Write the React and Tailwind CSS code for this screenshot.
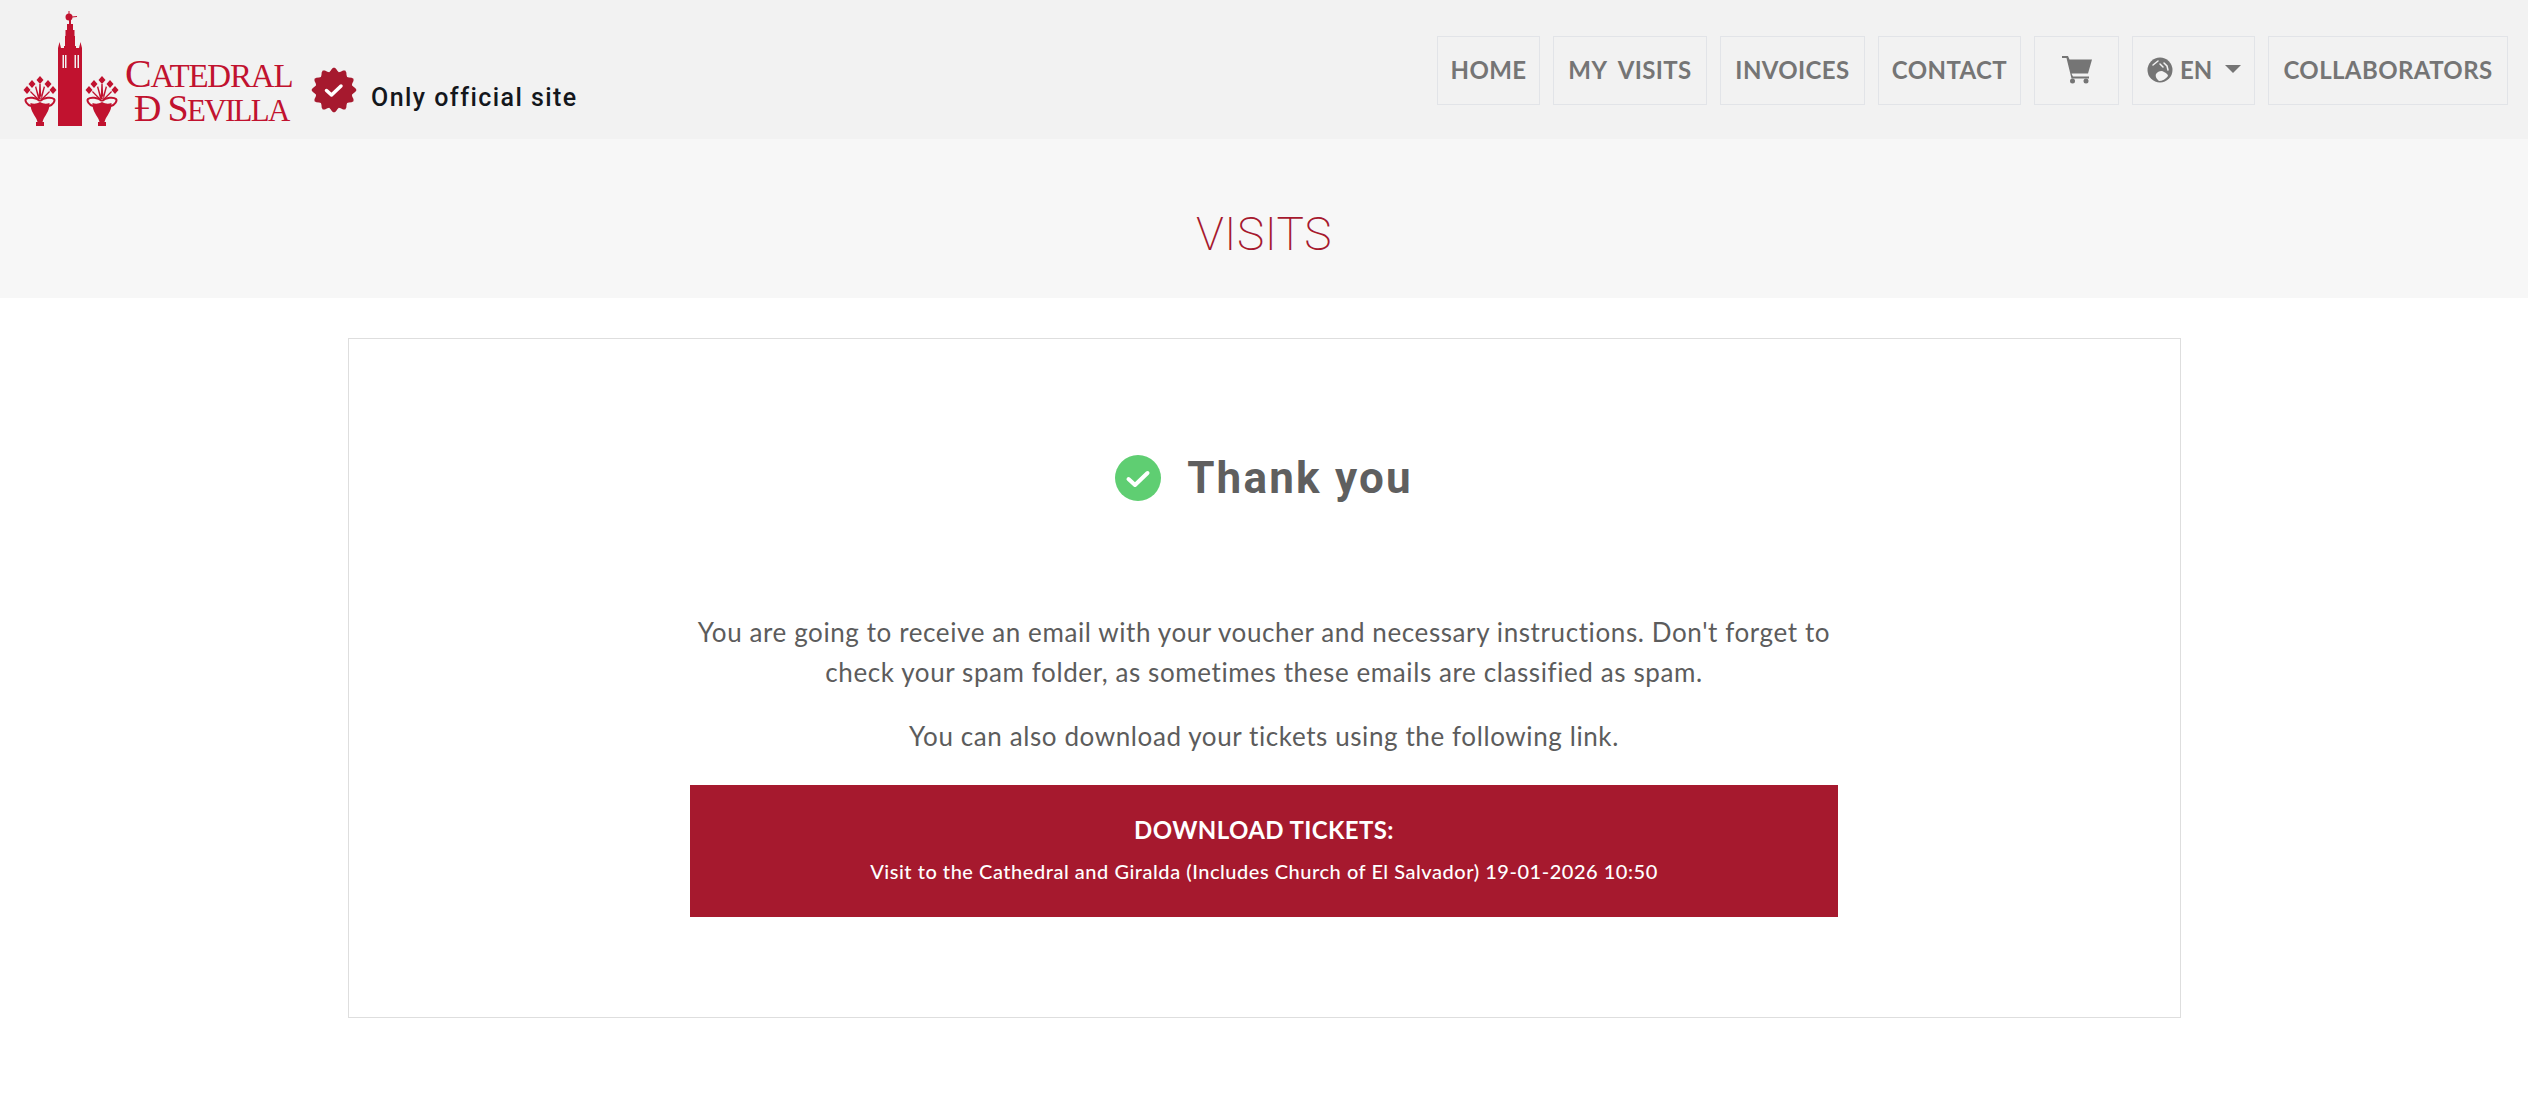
import { useMemo } from 'react';

const navItems = [
  { label: 'HOME', width: 'w-[103px]' },
  { label: 'MY VISITS', width: 'w-[154px] [word-spacing:6px]' },
  { label: 'INVOICES', width: 'w-[145px]' },
  { label: 'CONTACT', width: 'w-[143px]' },
];

function Vase({ x }) {
  return (
    <g transform={`translate(${x} 0)`} fill="#c1122f">
      {/* flores */}
      <path d="M0 76l3.500 4-3.500 4-3.500-4zM-8 80l3.500 4-3.500 4-3.500-4zM8 80l3.500 4-3.500 4-3.500-4zM-13 86l3.500 4-3.500 4-3.500-4zM13 86l3.500 4-3.500 4-3.500-4z" />
      <path d="M-0.7 84h1.400l0.600 15h-2.600zM-5 87l1.200-.8 3.500 12-1.600.5zM5 87l-1.200-.8-3.500 12 1.600.5zM-10 92l.8-1 7.500 7.500-1 1zM10 92l-.8-1-7.500 7.500 1 1z" />
      {/* asas */}
      <path d="M0 101c-4-4-12-4-14-2-1.500 1.500 1 6 5 7M0 101c4-4 12-4 14-2 1.500 1.500-1 6-5 7" fill="none" stroke="#c1122f" strokeWidth="2" />
      {/* cuerpo */}
      <path d="M-9.500 103c3 1 6 1 9.500-1 3.500 2 6.500 2 9.500 1 .5 6-3 11-6 16l-1 3h1.500v4h-8v-4h1.500l-1-3c-3-5-6.500-10-6-16z" />
    </g>
  );
}

function LogoMark() {
  return (
    <svg width="98" height="120" viewBox="22 10 98 120" className="shrink-0">
      <g fill="#c1122f">
        <circle cx="69" cy="17" r="3.500" />
        <path d="M68.500 11h1v4h-1zM72 16.500l5-.5v1l-5 .5zM69 20h2v4h-2zM67 24h6v6h-6zM65.500 30h9v6h-9zM65 36h10v12h-10z" />
        <path d="M58 126V48l1.500-6 1.500 6h3v-2h12v2h3l1.500-6 1.500 6v78z" />
      </g>
      <path d="M62.500 55h1.500v13h-1.500zM65 55h1.500v13H65zM74.500 55H76v13h-1.500zM77.500 55H79v13h-1.500z" fill="#f2f2f2" />
      <Vase x={40} />
      <Vase x={102} />
    </svg>
  );
}

function OfficialBadge() {
  // sello ondulado de 12 puntas
  const points = useMemo(() => {
    const pts = [];
    for (let i = 0; i < 72; i++) {
      const a = (i / 72) * Math.PI * 2;
      const r = 20.500 + 2 * Math.cos(a * 12);
      pts.push(`${(23 + r * Math.sin(a)).toFixed(2)},${(23 - r * Math.cos(a)).toFixed(2)}`);
    }
    return pts.join(' ');
  }, []);
  return (
    <svg width="46" height="46" viewBox="0 0 46 46" className="shrink-0">
      <polygon points={points} fill="#a6192e" />
      <path d="M15.500 23.500l5 4.500 9.500-9" fill="none" stroke="#fff" strokeWidth="3.500" strokeLinecap="round" strokeLinejoin="round" />
    </svg>
  );
}

function CartIcon() {
  return (
    <svg width="30" height="28" viewBox="0 0 30 28" fill="#757575">
      <path d="M0 0h6l1.500 3.500H30l-4 14H10.500l-1 .2L11 20.500h16v2H9.500L4.500 2H0z" />
      <circle cx="10.500" cy="25" r="2.500" />
      <circle cx="24" cy="25" r="2.500" />
    </svg>
  );
}

function GlobeIcon() {
  return (
    <svg width="26" height="26" viewBox="0 0 26 26" className="shrink-0">
      <circle cx="13" cy="13" r="12.500" fill="#757575" />
      <path d="M9 17c2-3 6-4 8-2 2 1 4 2 4 4-2 3-6 5-9 5-2-2-4-4-3-7z" fill="#f2f2f2" />
      <path d="M6 8l5-4M13 7l3 3M17 6l3 3 1 4" fill="none" stroke="#f2f2f2" strokeWidth="1.500" strokeLinecap="round" />
    </svg>
  );
}

export default function App() {
  return (
    <div className="min-h-[1095px] bg-white font-['Lato',sans-serif]">
      {/* HEADER */}
      <header className="flex h-[139px] items-center justify-between bg-[#f2f2f2] pl-[22px] pr-[20px]">
        <div className="mt-[1px] flex items-end">
          <LogoMark />
          <div className="mb-[3px] ml-[5px] w-[170px] font-['Liberation_Serif',serif] text-[#c1122f]">
            <div className="text-[40px] leading-[32px] tracking-[-1.2px] whitespace-nowrap">
              C<span className="text-[33px]">ATEDRAL</span>
            </div>
            <div className="pl-[9px] text-[38px] leading-[32px] tracking-[-1.7px] whitespace-nowrap">
              Ð S<span className="text-[31px]">EVILLA</span>
            </div>
          </div>
          <div className="mb-[14px] ml-[16px] flex items-center gap-[14px]">
            <OfficialBadge />
            <span className="mt-[14px] font-['Roboto',sans-serif] text-[25px] font-medium tracking-[1.45px] text-[#14171c]">Only official site</span>
          </div>
        </div>

        <nav className="mt-[1px] flex gap-[13px] text-[24px] font-bold text-[#757575]">
          {navItems.map((item) => (
            <a key={item.label} className={`flex h-[69px] items-center justify-center whitespace-nowrap border border-[#e2e4e8] tracking-[0.4px] ${item.width}`}>{item.label}</a>
          ))}
          <a className="flex h-[69px] w-[85px] items-center justify-center border border-[#e2e4e8]">
            <CartIcon />
          </a>
          <a className="flex h-[69px] w-[123px] items-center border border-[#e2e4e8] pl-[14px]">
            <GlobeIcon />
            <span className="ml-[7px]">EN</span>
            <span className="ml-[13px] mt-[-3px] border-x-[8px] border-t-[8px] border-x-transparent border-t-[#757575]" />
          </a>
          <a className="flex h-[69px] w-[240px] items-center justify-center border border-[#e2e4e8] tracking-[0.4px]">COLLABORATORS</a>
        </nav>
      </header>

      {/* BANNER */}
      <div className="flex h-[159px] justify-center bg-[#f7f7f7] pt-[68px]">
        <h1 className="font-['Roboto',sans-serif] text-[46px] leading-[54px] font-extralight tracking-[0.5px] text-[#a6192e]">VISITS</h1>
      </div>

      {/* CARD */}
      <main className="ml-[348px] mt-[40px] flex h-[680px] w-[1833px] flex-col items-center border border-[#dedede] pr-[1px] pt-[114px]">
        <div className="flex items-center gap-[26px]">
          <svg width="46" height="46" viewBox="0 0 46 46">
            <circle cx="23" cy="23" r="23" fill="#5fce72" />
            <path d="M13.500 24l6.500 6 12.500-12" fill="none" stroke="#fff" strokeWidth="4" strokeLinecap="round" strokeLinejoin="round" />
          </svg>
          <h2 className="font-['Roboto',sans-serif] text-[44px] leading-[50px] font-bold tracking-[2.2px] text-[#5f5f5f]">Thank you</h2>
        </div>

        <div className="mt-[109px] w-[1148px] text-center text-[26px] leading-[40px] tracking-[0.6px] text-[#5c5c5c]">
          <p>You are going to receive an email with your voucher and necessary instructions. Don't forget to check your spam folder, as sometimes these emails are classified as spam.</p>
          <p className="mt-[24px]">You can also download your tickets using the following link.</p>
        </div>

        <a className="mt-[29px] flex h-[132px] w-[1148px] flex-col items-center bg-[#a6192e] pt-[29px] text-white">
          <span className="text-[24px] leading-[32px] font-bold tracking-[0.4px]">DOWNLOAD TICKETS:</span>
          <span className="mt-[13px] text-[20px] leading-[24px] font-medium tracking-[0.53px]">Visit to the Cathedral and Giralda (Includes Church of El Salvador) 19-01-2026 10:50</span>
        </a>
      </main>
    </div>
  );
}
